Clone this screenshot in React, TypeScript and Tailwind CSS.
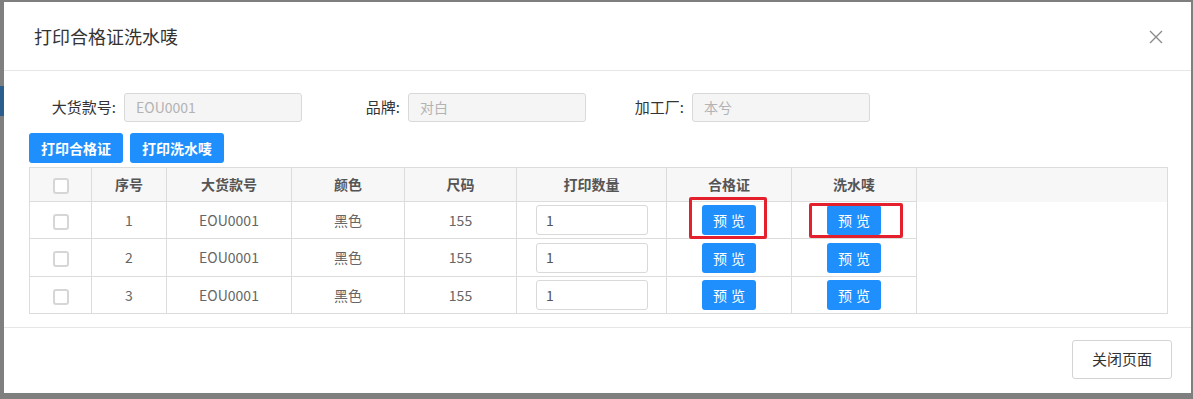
import React from "react";

const font = { fontFamily: '"Noto Sans CJK SC", "Noto Sans", sans-serif' };

const rows = [1, 2, 3];

function Checkbox() {
  return <span className="inline-block w-[16px] h-[16px] border-2 border-[#d6d6d6] rounded-[3px] bg-white align-middle" />;
}

function PreviewBtn() {
  return (
    <button className="w-[54px] h-[30px] bg-[#1e8ffc] text-white text-[14px] rounded-[3px] tracking-[4px] pl-[4px] leading-none">
      预览
    </button>
  );
}

export default function App() {
  const th = "border border-[#dcdcdc] text-[14px] font-bold text-[#555] text-center";
  const td = "border border-[#dcdcdc] text-[14px] text-[#666] text-center";
  return (
    <div className="relative w-[1193px] h-[399px] bg-[#7f7f7f] overflow-hidden pt-[2px] pl-[4px]" style={font}>
      <div className="absolute left-0 top-[86px] w-[4px] h-[30px] bg-[#2c5d8f]" />
      <div className="w-[1187px] h-[391px] bg-white flex flex-col">
        {/* header */}
        <div className="h-[69px] shrink-0 flex items-center justify-between pl-[30px] pr-[28px] border-b border-[#e6e6e6]">
          <div className="text-[18px] text-[#333]">打印合格证洗水唛</div>
          <svg width="14" height="14" viewBox="0 0 14 14" className="mt-[2px]">
            <path d="M1 1 L13 13 M13 1 L1 13" stroke="#8c8c8c" strokeWidth="1.4" fill="none" />
          </svg>
        </div>
        {/* body */}
        <div className="flex-1 pl-[25px] pt-[22px]">
          <div className="flex gap-[11px] h-[29px]">
            {[
              ["大货款号:", "EOU0001"],
              ["品牌:", "对白"],
              ["加工厂:", "本兮"],
            ].map(([l, v]) => (
              <div key={l} className="flex items-center">
                <div className="w-[95px] text-right pr-[8px] text-[15px] text-[#333]">{l}</div>
                <div className="w-[178px] h-[29px] bg-[#f5f5f5] border border-[#d9d9d9] rounded-[3px] pl-[11px] flex items-center text-[14px] text-[#b3b3b3]">
                  {v}
                </div>
              </div>
            ))}
          </div>
          <div className="flex gap-[7px] mt-[11px]">
            <button className="w-[94px] h-[30px] bg-[#1e8ffc] text-white text-[14px] font-bold rounded-[3px]">打印合格证</button>
            <button className="w-[94px] h-[30px] bg-[#1e8ffc] text-white text-[14px] font-bold rounded-[3px]">打印洗水唛</button>
          </div>
          <table className="mt-[4px] border-collapse table-fixed w-[1139px]">
            <colgroup>
              <col className="w-[62px]" />
              <col className="w-[75px]" />
              <col className="w-[125px]" />
              <col className="w-[113px]" />
              <col className="w-[112px]" />
              <col className="w-[150px]" />
              <col className="w-[125px]" />
              <col className="w-[125px]" />
              <col />
            </colgroup>
            <thead>
              <tr className="h-[34px] bg-[#f7f7f7]">
                <th className={th}><Checkbox /></th>
                <th className={th}>序号</th>
                <th className={th}>大货款号</th>
                <th className={th}>颜色</th>
                <th className={th}>尺码</th>
                <th className={th}>打印数量</th>
                <th className={th}>合格证</th>
                <th className={th}>洗水唛</th>
                <th className="border-t border-r border-[#dcdcdc] border-b-0" />
              </tr>
            </thead>
            <tbody>
              {rows.map((n, i) => (
                <tr key={n} className={i === 1 ? "h-[38px]" : "h-[37px]"}>
                  <td className={td}><Checkbox /></td>
                  <td className={td}>{n}</td>
                  <td className={td}>EOU0001</td>
                  <td className={td}>黑色</td>
                  <td className={td}>155</td>
                  <td className={td}>
                    <div className="ml-[19px] w-[112px] h-[30px] border border-[#d9d9d9] rounded-[3px] text-left pl-[9px] flex items-center text-[14px] text-[#555]">1</div>
                  </td>
                  <td className={td}><PreviewBtn /></td>
                  <td className={td}><PreviewBtn /></td>
                  {i === 0 && <td rowSpan={3} className="border-r border-b border-l border-[#dcdcdc] border-t-0" />}
                </tr>
              ))}
            </tbody>
          </table>
        </div>
        {/* footer */}
        <div className="h-[66px] shrink-0 border-t border-[#e6e6e6] flex items-start justify-end pt-[12px] pr-[19px]">
          <button className="w-[100px] h-[39px] bg-white border border-[#d4d4d4] rounded-[3px] text-[15px] text-[#333]">关闭页面</button>
        </div>
      </div>
      {/* annotation boxes */}
      <div className="absolute left-[689px] top-[197px] w-[78px] h-[42px] border-[3px] border-[#e3202b] rounded-[2px]" />
      <div className="absolute left-[809px] top-[203px] w-[94px] h-[35px] border-[3px] border-[#e3202b] rounded-[2px]" />
    </div>
  );
}
